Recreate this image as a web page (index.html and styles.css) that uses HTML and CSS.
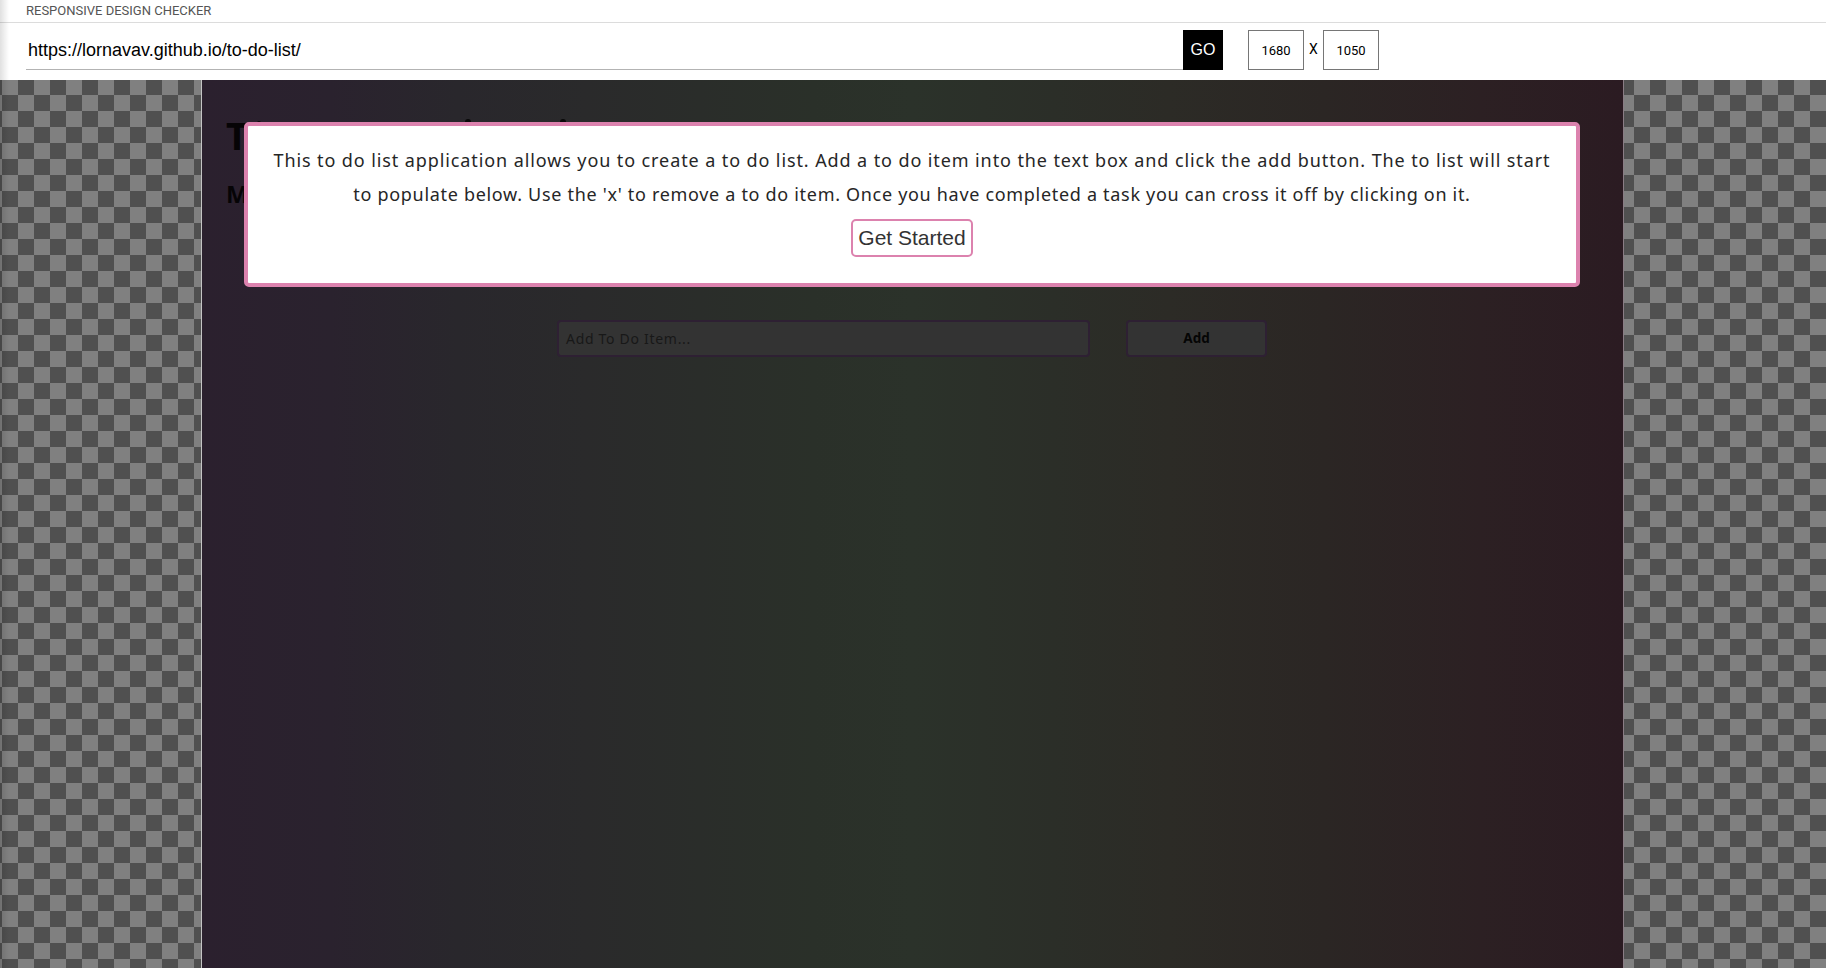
FILE: index.html
```html
<!DOCTYPE html>
<html lang="en">
<head>
<meta charset="utf-8">
<title>Responsive Design Checker</title>
<link rel="stylesheet" href="styles.css">
</head>
<body>
<div class="brand">RESPONSIVE DESIGN CHECKER</div>
<header class="toolbar">
  <div class="url">https://lornavav.github.io/to-do-list/</div>
  <button class="go">GO</button>
  <div class="size">1680</div>
  <span class="times">X</span>
  <div class="size">1050</div>
</header>
<main class="stage">
  <section class="device">
    <h1 class="title">T</h1>
    <h2 class="subtitle">M</h2>
    <i class="stroke stroke-a"></i><i class="stroke stroke-b"></i><i class="stroke stroke-c"></i>
    <div class="modal">
      <p class="line line-one"><span>This to do list application allows you to create a to do list. Add a to do item into the text box and click the add button. The to list will start</span></p>
      <p class="line line-two"><span>to populate below. Use the 'x' to remove a to do item. Once you have completed a task you can cross it off by clicking on it.</span></p>
      <button class="start">Get Started</button>
    </div>
    <div class="form">
      <div class="field">Add To Do Item...</div>
      <div class="add">Add</div>
    </div>
  </section>
</main>
<div class="edge"></div>
</body>
</html>
```
FILE: styles.css
```css
* { box-sizing: border-box; }
body {
  margin: 0;
  width: 1826px;
  height: 968px;
  overflow: hidden;
  display: flex;
  flex-direction: column;
  background: #fff;
  font-family: "Liberation Sans", Arial, sans-serif;
}
.brand {
  height: 23px;
  padding-left: 26px;
  border-bottom: 1px solid #dcdcdc;
  font: 13px/21px Roboto, sans-serif;
  color: #555;
}
.toolbar {
  height: 57px;
  padding: 7px 0 0 26px;
  display: flex;
  align-items: flex-start;
}
.url {
  width: 1157px;
  height: 40px;
  padding-left: 2px;
  border-bottom: 1px solid #b3b3b3;
  font-size: 18px;
  line-height: 40px;
  color: #000;
}
.go {
  width: 40px;
  height: 40px;
  padding: 0;
  border: 0;
  margin-right: 25px;
  background: #000;
  color: #fff;
  font: 16px/38px "Liberation Sans", Arial, sans-serif;
}
.size {
  width: 56px;
  height: 40px;
  border: 1px solid #767676;
  text-align: center;
  font: 13px/39px Roboto, sans-serif;
}
.times {
  width: 19px;
  text-align: center;
  font: 14px/39px Roboto, sans-serif;
}
.stage {
  flex: 1;
  padding-left: 201px;
  background: repeating-conic-gradient(#505050 0 25%, #808080 0 50%) 2px -1px / 32px 32px;
}
.device {
  position: relative;
  width: 1423px;
  height: 888px;
  border-left: 1px solid #c4c4c4;
  border-right: 1px solid #8a7d85;
  padding: 42px 43px 0 42px;
  background: linear-gradient(90deg, #2b202e 0%, #2a222e 9%, #29272c 18%, #2a2a2b 27%, #2a2d2a 35%, #2a3029 43%, #2b322a 50%, #2b2e28 60%, #2c2b26 68%, #2b2624 79%, #2c2023 90%, #2b1b22 100%);
  font-family: "Noto Sans", sans-serif;
}
.title, .subtitle {
  position: absolute;
  left: 24px;
  margin: 0;
  color: #060406;
}
.title { top: 30px; font-size: 38px; line-height: 50px; }
.subtitle { top: 94px; font-size: 24px; line-height: 40px; }
.stroke {
  position: absolute;
  top: 39px;
  width: 6px;
  height: 5px;
  border-radius: 3px 3px 0 0;
  background: #080808;
}
.stroke-a { left: 55px; top: 41px; width: 4px; height: 2px; }
.stroke-b { left: 263px; }
.stroke-c { left: 358px; }
.modal {
  position: relative;
  height: 165px;
  border: 4px solid #dc82ae;
  border-radius: 5px;
  background: #fff;
  padding-top: 17px;
  text-align: center;
  color: #262626;
}
.line {
  margin: 0;
  height: 34px;
  line-height: 34px;
  font-size: 18px;
  white-space: nowrap;
}
.line-one { letter-spacing: 0.9px; }
.line-two { letter-spacing: 0.69px; }
.start {
  height: 38px;
  width: 122px;
  margin-top: 8px;
  padding: 0;
  border: 2px solid #dc82ae;
  border-radius: 5px;
  background: #fff;
  color: #333;
  font: 21px/32px "Liberation Sans", Arial, sans-serif;
}
.form {
  display: flex;
  gap: 36px;
  margin: 33px 0 0 313px;
}
.field, .add {
  height: 37px;
  border: 2px solid #2e2033;
  border-radius: 4px;
  background: #333;
  line-height: 33px;
}
.field { width: 533px; padding-left: 7px; font-size: 14px; letter-spacing: 0.7px; color: #181818; }
.add { width: 141px; text-align: center; font-size: 13.5px; font-weight: 700; color: #050505; }
.edge {
  position: absolute;
  left: 0;
  top: 0;
  width: 9px;
  height: 968px;
  background: linear-gradient(90deg, rgba(0, 0, 0, 0.12), rgba(0, 0, 0, 0));
}
```
